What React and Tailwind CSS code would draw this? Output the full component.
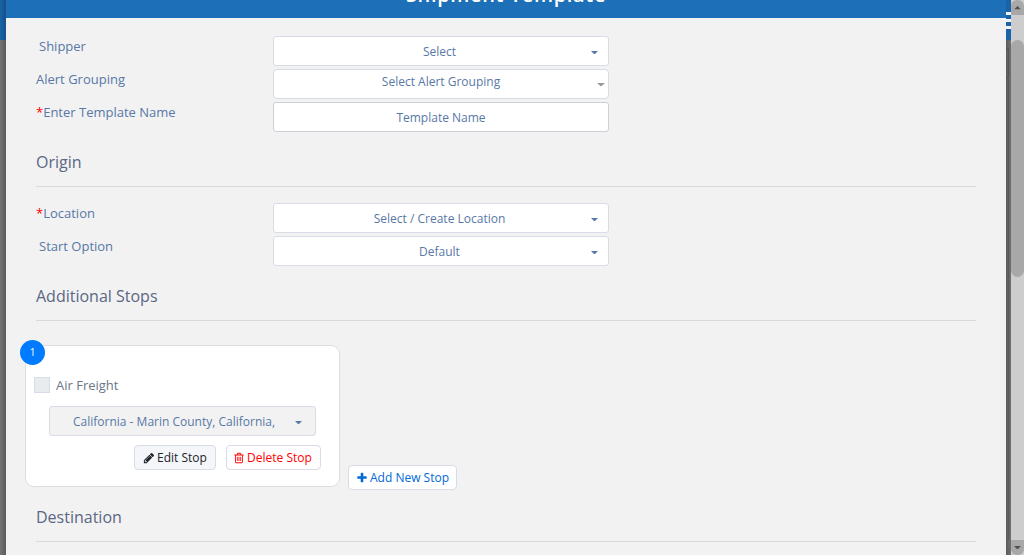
const PENCIL =
  "M491 1536l91-91-235-235-91 91v107h128v128h107zm523-928q0-22-22-22-10 0-17 7l-542 542q-7 7-7 17 0 22 22 22 10 0 17-7l542-542q7-7 7-17zm-54-192l416 416-832 832h-416v-416zm683 96q0 53-37 90l-166 166-416-416 166-165q36-38 90-38 53 0 91 38l235 234q37 39 37 91z";
const TRASH =
  "M704 736v576q0 14-9 23t-23 9h-64q-14 0-23-9t-9-23v-576q0-14 9-23t23-9h64q14 0 23 9t9 23zm256 0v576q0 14-9 23t-23 9h-64q-14 0-23-9t-9-23v-576q0-14 9-23t23-9h64q14 0 23 9t9 23zm256 0v576q0 14-9 23t-23 9h-64q-14 0-23-9t-9-23v-576q0-14 9-23t23-9h64q14 0 23 9t9 23zm128 724v-948h-896v948q0 22 7 40.5t14.5 27 10.5 8.5h832q3 0 10.5-8.5t14.5-27 7-40.5zm-672-1076h448l-48-117q-7-9-17-11h-317q-10 2-17 11zm928 32v64q0 14-9 23t-23 9h-96v948q0 83-47 143.5t-113 60.5h-832q-66 0-113-58.5t-47-141.5v-952h-96q-14 0-23-9t-9-23v-64q0-14 9-23t23-9h309l70-167q15-37 54-63t79-26h320q40 0 79 26t54 63l70 167h309q14 0 23 9t9 23z";
const PLUS =
  "M1600 736v192q0 40-28 68t-68 28h-416v416q0 40-28 68t-68 28h-192q-40 0-68-28t-28-68v-416h-416q-40 0-68-28t-28-68v-192q0-40 28-68t68-28h416v-416q0-40 28-68t68-28h192q40 0 68 28t28 68v416h416q40 0 68 28t28 68z";

function Icon({ path, className = "" }) {
  return (
    <svg viewBox="0 0 1792 1792" fill="currentColor" className={`size-3 shrink-0 ${className}`}>
      <path d={path} />
    </svg>
  );
}

function Caret({ className = "w-[7px]" }) {
  return (
    <svg viewBox="0 0 8 4" preserveAspectRatio="none" className={`h-[3.5px] shrink-0 fill-current ${className}`}>
      <path d="M0 0h8L4 4z" />
    </svg>
  );
}

function Label({ required, indent, children }) {
  return (
    <label className={`w-[237px] leading-5 ${indent ? "pl-[3px]" : ""}`}>
      {required && <span className="text-[#ff0000]">*</span>}
      {children}
    </label>
  );
}

function Select({ children }) {
  return (
    <button className="flex h-[30px] w-[336px] items-center rounded-[3px] border border-[#d8dce6] bg-white pr-[10px] pl-2 text-[12px]">
      <span className="flex-1 pt-0.5 pl-1.5 text-center leading-4">{children}</span>
      <Caret className="mt-[3px] w-[7px]" />
    </button>
  );
}

function Section({ title }) {
  return (
    <h2 className="flex h-[49px] items-center border-b border-[#d9d9d9] text-[16px] leading-6 text-[#5a6785]">
      {title}
    </h2>
  );
}

export default function App() {
  return (
    <div className="flex h-[555px] w-[1024px] overflow-hidden bg-[#6f6f6f] font-['Open_Sans',sans-serif] text-[13px] text-[#5878a6]">
      <div className="flex w-1.5 flex-col">
        <div className="h-10 bg-linear-to-r from-[#1a65a8] to-[#15508a]" />
        <div className="flex-1 bg-linear-to-r from-[#747474] to-[#5b5b5b]" />
      </div>

      <main className="flex w-[1000px] shrink-0 flex-col bg-[#f2f2f2]">
        <header className="flex h-[18px] items-end justify-center bg-[#1d70b8] pb-[9px]">
          <h1 className="text-[20px] leading-[28px] font-semibold tracking-[0.65px] text-white">Shipment Template</h1>
        </header>

        <div className="flex flex-col pt-[18px] pr-[30px] pl-[30px]">
          <div className="flex flex-col gap-[3px]">
            <div className="flex h-[30px]">
              <Label indent>Shipper</Label>
              <Select>Select</Select>
            </div>
            <div className="flex h-[30px]">
              <Label>Alert Grouping</Label>
              <button className="flex h-[30px] w-[336px] items-center rounded-[4px] border border-[#d8dce6] bg-white pr-[3px] text-[12px]">
                <span className="flex-1 pb-[5px] pl-[11px] text-center leading-4">Select Alert Grouping</span>
                <Caret className="mt-0.5 w-2 text-[#999999]" />
              </button>
            </div>
            <div className="flex h-[30px]">
              <Label required>Enter Template Name</Label>
              <div className="flex h-[30px] w-[336px] items-center justify-center rounded-[3px] border border-[#ccd0d7] bg-white pt-0.5 text-[12px]">
                Template Name
              </div>
            </div>
          </div>

          <div className="mt-1.5">
            <Section title="Origin" />
          </div>
          <div className="mt-4 flex flex-col gap-[3px]">
            <div className="flex h-[30px]">
              <Label required>Location</Label>
              <Select>Select / Create Location</Select>
            </div>
            <div className="flex h-[30px]">
              <Label indent>Start Option</Label>
              <Select>Default</Select>
            </div>
          </div>

          <div className="mt-1.5">
            <Section title="Additional Stops" />
          </div>
          <div className="mt-6 -ml-[11px] flex items-end">
            <section className="relative h-[142px] w-[315px] rounded-[9px] border border-[#dedede] bg-white pt-[30px] pl-2">
              <span className="absolute -top-1.5 -left-1.5 flex size-[25px] items-center justify-center rounded-full bg-[#007bff] text-[10px] text-white">
                1
              </span>
              <div className="flex h-[18px] items-center text-[#6c7787]">
                <span className="mr-[6px] size-4 border border-[#d8dce6] bg-[#e9ecef]" />
                <span className="pt-0.5">Air Freight</span>
              </div>
              <button className="mt-3 ml-[15px] flex h-[30px] w-[267px] items-center rounded-[3px] border border-[#d8dce6] bg-[#f2f2f2] pr-[13px] pl-[23px] text-[12px]">
                <span className="flex-1 pt-0.5 text-left leading-4">California - Marin County, California,</span>
                <Caret className="mt-[3px] w-[7px]" />
              </button>
              <div className="mt-[9px] flex justify-end gap-2.5 pr-[18px] text-[12px]">
                <button className="flex h-[25px] w-[82px] items-center justify-center gap-0.5 rounded-[4px] border border-[#d8dce6] bg-[#f4f6fa] text-[#212529]">
                  <Icon path={PENCIL} />
                  Edit Stop
                </button>
                <button className="flex h-[25px] w-[95px] items-center justify-center gap-0.5 rounded-[4px] border border-[#d8dce6] bg-white pr-0.5 text-[#ff0000]">
                  <Icon path={TRASH} />
                  Delete Stop
                </button>
              </div>
            </section>
            <button className="-mb-[3px] ml-2 flex h-[25px] w-[109px] items-center justify-center gap-0.5 rounded-[4px] border border-[#d8dce6] bg-white text-[12px] text-[#0069d9]">
              <Icon path={PLUS} />
              Add New Stop
            </button>
          </div>

          <div className="mt-[6px]">
            <Section title="Destination" />
          </div>
        </div>
      </main>

      <div className="flex w-[5px] shrink-0 flex-col bg-linear-to-r from-[#5b5b5b] to-[#707070]">
        <div className="flex h-10 shrink-0 flex-col gap-1 bg-[#1963a8] pt-3">
          <div className="h-[3px] bg-[#f2f2f2]" />
          <div className="h-[3px] bg-[#f2f2f2]" />
          <div className="h-[3px] bg-[#f2f2f2]" />
        </div>
        <div className="mt-2 h-[30px] w-[3px] shrink-0 rounded-r-[2px] border-y border-r border-[#555555]" />
        <div className="h-[462px] w-[3px] rounded-r-[2px] border-r border-[#555a5e]" />
      </div>

      <aside className="flex w-[13px] shrink-0 flex-col bg-[#cdcdcd]">
        <div className="flex h-[15px] items-center justify-center rounded-t-[6px] bg-[#a8a8a8]">
          <Caret className="w-[7px] rotate-180 text-[#505050]" />
        </div>
        <div className="mt-[25px] h-[237px] rounded-full bg-[#a8a8a8]" />
        <div className="mt-auto flex h-[15px] items-center justify-center rounded-b-[6px] bg-[#a8a8a8]">
          <Caret className="w-[7px] text-[#505050]" />
        </div>
      </aside>
    </div>
  );
}
